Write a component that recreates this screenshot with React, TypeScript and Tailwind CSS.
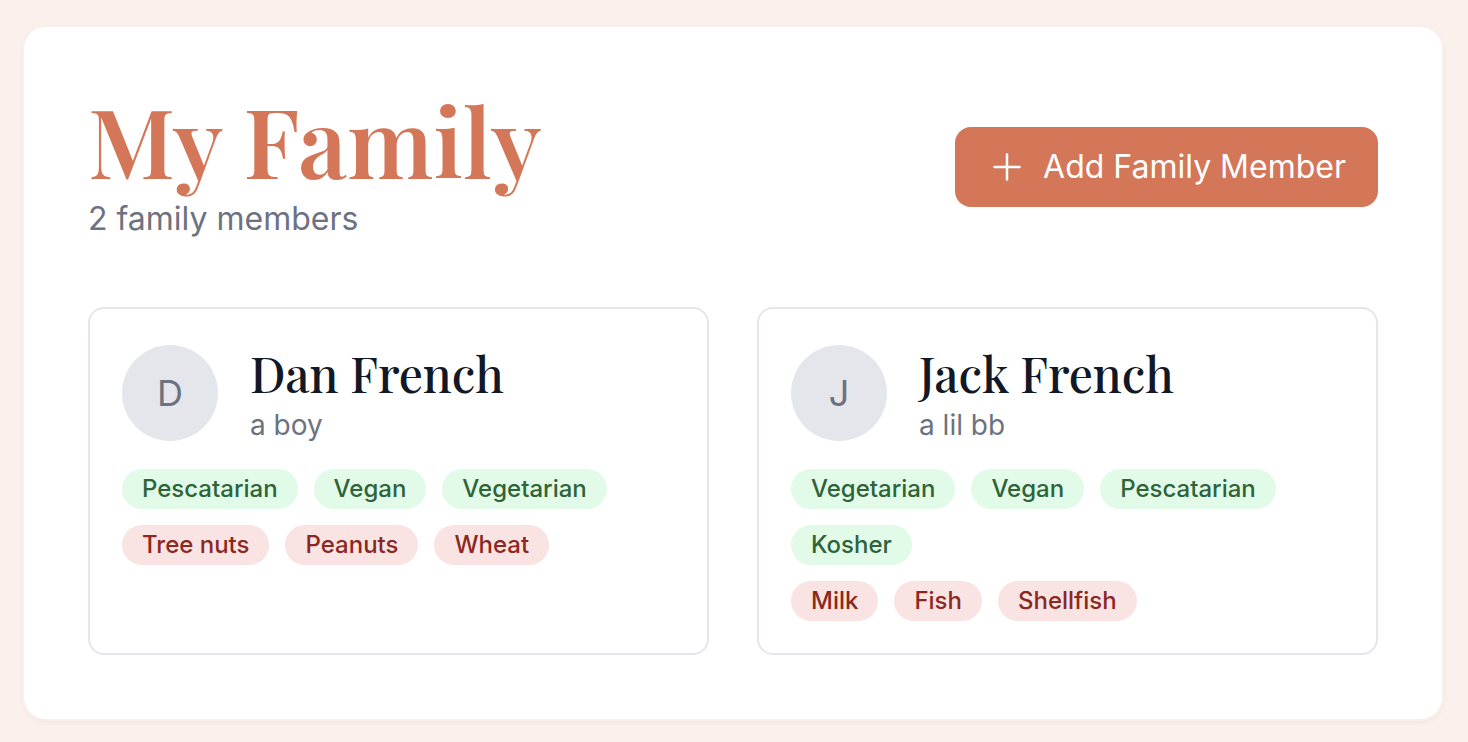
type Member = {
  name: string;
  description: string;
  diets: string[];
  allergies: string[];
};

const members: Member[] = [
  {
    name: "Dan French",
    description: "a boy",
    diets: ["Pescatarian", "Vegan", "Vegetarian"],
    allergies: ["Tree nuts", "Peanuts", "Wheat"],
  },
  {
    name: "Jack French",
    description: "a lil bb",
    diets: ["Vegetarian", "Vegan", "Pescatarian", "Kosher"],
    allergies: ["Milk", "Fish", "Shellfish"],
  },
];

function PlusIcon() {
  return (
    <svg
      className="size-10"
      viewBox="0 0 24 24"
      fill="none"
      stroke="currentColor"
      strokeWidth={1.5}
      strokeLinecap="round"
      strokeLinejoin="round"
      aria-hidden="true"
    >
      <path d="M12 4.5v15m7.5-7.5h-15" />
    </svg>
  );
}

function TagList({ tags, tone }: { tags: string[]; tone: "green" | "red" }) {
  const colors =
    tone === "green" ? "bg-[#e2fbe8] text-[#2f6338]" : "bg-[#f9e3e3] text-[#8b2822]";
  return (
    <ul className="flex flex-wrap gap-4">
      {tags.map((tag) => (
        <li
          key={tag}
          className={`rounded-full px-5 py-1 text-[24px] leading-8 font-medium ${colors}`}
        >
          {tag}
        </li>
      ))}
    </ul>
  );
}

function MemberCard({ member }: { member: Member }) {
  return (
    <article className="rounded-2xl border-2 border-[#e5e6eb] p-8">
      <div className="flex items-center gap-8">
        <div className="flex size-24 shrink-0 items-center justify-center rounded-full bg-[#e5e6eb] text-[36px] text-[#6c727f]">
          {member.name[0]}
        </div>
        <div>
          <h2 className="font-['Playfair_Display','Liberation_Serif',serif] text-[48px] leading-16 font-medium text-[#121826]">
            {member.name}
          </h2>
          <p className="text-[28px] leading-10 text-[#6c727f]">{member.description}</p>
        </div>
      </div>
      <div className="mt-6 flex flex-col gap-4">
        <TagList tags={member.diets} tone="green" />
        <TagList tags={member.allergies} tone="red" />
      </div>
    </article>
  );
}

export default function App() {
  return (
    <main className="min-h-screen bg-[#fbf1ec] pt-[25px] pr-6 pb-5 pl-[22px] font-['Inter',sans-serif] text-[32px]">
      <section className="rounded-3xl border-2 border-[#f9efed] bg-white p-16 shadow-[0_2px_4px_rgba(0,0,0,0.04)]">
        <header className="flex items-center justify-between gap-8">
          <div>
            <h1 className="pb-2 font-['Playfair_Display','Liberation_Serif',serif] text-[96px] leading-24 font-semibold text-[#d47658]">
              My Family
            </h1>
            <p className="leading-12 text-[#6c727f]">2 family members</p>
          </div>
          <button
            type="button"
            className="flex h-20 items-center gap-4 rounded-2xl bg-[#d47658] px-8 font-normal text-white"
          >
            <PlusIcon />
            Add Family Member
          </button>
        </header>
        <div className="mt-16 grid grid-cols-2 gap-12">
          {members.map((member) => (
            <MemberCard key={member.name} member={member} />
          ))}
        </div>
      </section>
    </main>
  );
}
